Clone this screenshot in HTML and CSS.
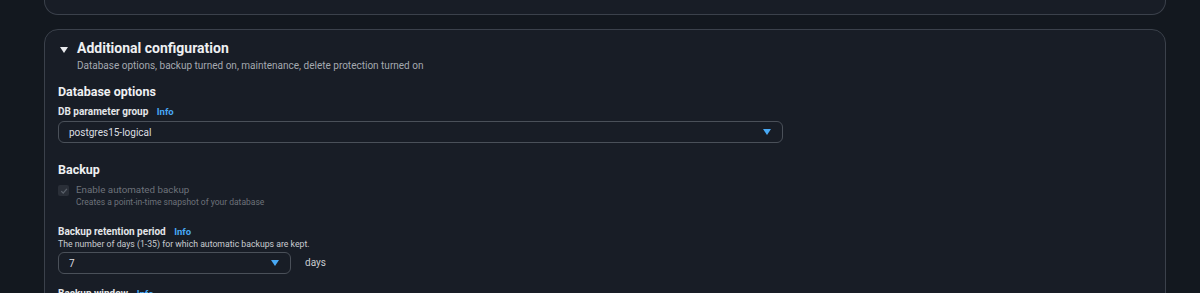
FILE: index.html
```html
<!DOCTYPE html>
<html lang="en">
<head>
  <meta charset="UTF-8">
  <title>Create database</title>
  <link rel="stylesheet" href="styles.css">
</head>
<body>

<div class="page">
  <!-- bottom of the previous panel -->
  <div class="panel panel-prev"></div>

  <!-- Additional configuration -->
  <div class="panel">
    <div class="panel-head">
      <span class="caret"></span>
      <div>
        <h2>Additional configuration</h2>
        <p class="panel-desc">Database options, backup turned on, maintenance, delete protection turned on</p>
      </div>
    </div>

    <h3>Database options</h3>
    <div class="field">
      <label>DB parameter group <a class="info">Info</a></label>
      <div class="select select-wide">
        <span>postgres15-logical</span>
        <span class="arrow"></span>
      </div>
    </div>

    <h3 class="section-gap">Backup</h3>
    <div class="check">
      <span class="box">
        <svg width="8" height="8" viewBox="0 0 10 10"><path d="M1.5 5.2 L4 7.6 L8.6 2.4" fill="none" stroke="#5a606a" stroke-width="1.6"/></svg>
      </span>
      <div>
        <div class="check-label">Enable automated backup</div>
        <div class="check-desc">Creates a point-in-time snapshot of your database</div>
      </div>
    </div>

    <div class="field field-gap">
      <label>Backup retention period <a class="info">Info</a></label>
      <p class="hint">The number of days (1-35) for which automatic backups are kept.</p>
      <div class="row">
        <div class="select select-small">
          <span>7</span>
          <span class="arrow"></span>
        </div>
        <span class="unit">days</span>
      </div>
    </div>

    <div class="field field-gap-sm">
      <label>Backup window <a class="info">Info</a></label>
    </div>
  </div>
</div>

</body>
</html>
```

FILE: styles.css
```css
* {
  box-sizing: border-box;
}

body {
  margin: 0;
  background: #13181f;
  font-family: Roboto, 'Liberation Sans', sans-serif;
  color: #d5d8dc;
}

.page {
  padding: 0 34px 0 44px;
}

.panel {
  background: #181d26;
  border: 1px solid #3b414b;
  border-radius: 14px;
  padding: 10px 13px 20px 13px;
}

.panel-prev {
  height: 15px;
  border-top: none;
  border-radius: 0 0 14px 14px;
  margin-bottom: 14px;
  padding: 0;
}

.panel-head {
  display: flex;
  align-items: flex-start;
  gap: 9px;
  padding-left: 2px;
}

.caret {
  width: 0;
  height: 0;
  margin-top: 7px;
  border-left: 4px solid transparent;
  border-right: 4px solid transparent;
  border-top: 6px solid #e8eaed;
}

h2 {
  margin: 0;
  font-size: 14px;
  font-weight: bold;
  color: #eef0f2;
}

.panel-desc {
  margin: 4px 0 0;
  font-size: 10px;
  color: #a4a9b0;
}

h3 {
  margin: 13px 0 7px;
  font-size: 12.5px;
  font-weight: bold;
  color: #eef0f2;
}

.section-gap {
  margin-top: 19px;
  margin-bottom: 6px;
}

label {
  display: block;
  font-size: 10px;
  font-weight: bold;
  color: #e4e6e9;
}

.info {
  margin-left: 6px;
  font-size: 9.5px;
  color: #48a9f5;
}

.select {
  display: flex;
  align-items: center;
  justify-content: space-between;
  height: 22px;
  margin-top: 4px;
  padding: 0 11px 0 10px;
  border: 1px solid #4a5059;
  border-radius: 6px;
  font-size: 10px;
  color: #dcdfe3;
}

.select-wide {
  width: 725px;
}

.select-small {
  width: 233px;
}

.row .select {
  margin-top: 3px;
}

.arrow {
  width: 0;
  height: 0;
  border-left: 4px solid transparent;
  border-right: 4px solid transparent;
  border-top: 6px solid #48a9f5;
}

.check {
  display: flex;
  gap: 7px;
  margin-top: 7px;
}

.box {
  display: flex;
  align-items: center;
  justify-content: center;
  width: 11px;
  height: 11px;
  margin-top: 1px;
  background: #2a2f38;
  border-radius: 2px;
}

.check-label {
  font-size: 9.8px;
  color: #6d727a;
}

.check-desc {
  margin-top: 2px;
  font-size: 8.5px;
  color: #6d727a;
}

.field-gap {
  margin-top: 19px;
}

.field-gap-sm {
  margin-top: 14px;
}

.hint {
  margin: 2px 0 0;
  font-size: 8.7px;
  color: #c9ccd0;
}

.row {
  display: flex;
  align-items: center;
  gap: 14px;
}

.unit {
  margin-top: 1px;
  font-size: 10px;
  color: #c9ccd0;
}
```
